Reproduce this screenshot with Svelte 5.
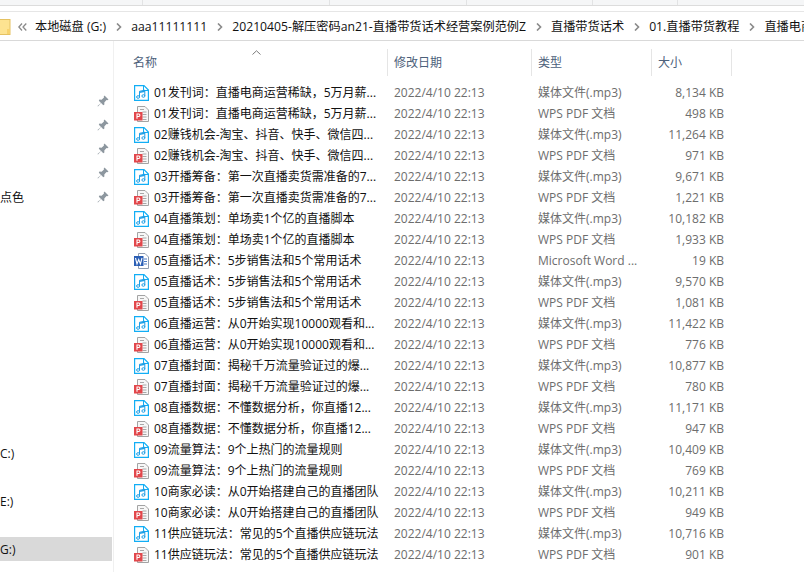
<script>
	const trunc = {
		a: '01发刊词：直播电商运营稀缺，5万月薪...',
		b: '02赚钱机会-淘宝、抖音、快手、微信四...',
		c: '03开播筹备：第一次直播卖货需准备的7...',
		d: '04直播策划：单场卖1个亿的直播脚本',
		e: '05直播话术：5步销售法和5个常用话术',
		f: '06直播运营：从0开始实现10000观看和...',
		g: '07直播封面：揭秘千万流量验证过的爆...',
		h: '08直播数据：不懂数据分析，你直播12...',
		i: '09流量算法：9个上热门的流量规则',
		j: '10商家必读：从0开始搭建自己的直播团队',
		k: '11供应链玩法：常见的5个直播供应链玩法'
	};
	const MP3 = '媒体文件(.mp3)';
	const PDF = 'WPS PDF 文档';
	const files = [
		{ name: trunc.a, kind: 'mp3', type: MP3, size: '8,134 KB' },
		{ name: trunc.a, kind: 'pdf', type: PDF, size: '498 KB' },
		{ name: trunc.b, kind: 'mp3', type: MP3, size: '11,264 KB' },
		{ name: trunc.b, kind: 'pdf', type: PDF, size: '971 KB' },
		{ name: trunc.c, kind: 'mp3', type: MP3, size: '9,671 KB' },
		{ name: trunc.c, kind: 'pdf', type: PDF, size: '1,221 KB' },
		{ name: trunc.d, kind: 'mp3', type: MP3, size: '10,182 KB' },
		{ name: trunc.d, kind: 'pdf', type: PDF, size: '1,933 KB' },
		{ name: trunc.e, kind: 'doc', type: 'Microsoft Word ...', size: '19 KB' },
		{ name: trunc.e, kind: 'mp3', type: MP3, size: '9,570 KB' },
		{ name: trunc.e, kind: 'pdf', type: PDF, size: '1,081 KB' },
		{ name: trunc.f, kind: 'mp3', type: MP3, size: '11,422 KB' },
		{ name: trunc.f, kind: 'pdf', type: PDF, size: '776 KB' },
		{ name: trunc.g, kind: 'mp3', type: MP3, size: '10,877 KB' },
		{ name: trunc.g, kind: 'pdf', type: PDF, size: '780 KB' },
		{ name: trunc.h, kind: 'mp3', type: MP3, size: '11,171 KB' },
		{ name: trunc.h, kind: 'pdf', type: PDF, size: '947 KB' },
		{ name: trunc.i, kind: 'mp3', type: MP3, size: '10,409 KB' },
		{ name: trunc.i, kind: 'pdf', type: PDF, size: '769 KB' },
		{ name: trunc.j, kind: 'mp3', type: MP3, size: '10,211 KB' },
		{ name: trunc.j, kind: 'pdf', type: PDF, size: '949 KB' },
		{ name: trunc.k, kind: 'mp3', type: MP3, size: '10,716 KB' },
		{ name: trunc.k, kind: 'pdf', type: PDF, size: '901 KB' }
	];
	const crumbs = ['本地磁盘 (G:)', 'aaa11111111', '20210405-解压密码an21-直播带货话术经营案例范例Z', '直播带货话术', '01.直播带货教程', '直播电商'];
	const pinned = ['', '', '', '', '点色'];
	const ribbonGroups = [143, 187, 137, 126, 85];
</script>

<div class="window">
	<div class="ribbon">
		{#each ribbonGroups as width}
			<div class="ribbon-group" style="width: {width}px"></div>
		{/each}
	</div>

	<div class="address">
		<svg class="folder" width="11" height="16" viewBox="0 0 11 16">
			<rect x="-6" y=".5" width="16" height="15" fill="#fde391" stroke="#e5c262" />
			<rect x="7" y="10" width="3" height="5" fill="#f7d36e" />
		</svg>
		<svg class="back" width="9" height="8" viewBox="0 0 9 8">
			<path d="M4 .5 .8 4 4 7.500M8.300 .5 5 4l3.300 3.500" fill="none" stroke="#8a8a8a" stroke-width="1.300" />
		</svg>
		{#each crumbs as crumb, i}
			<span class="crumb">{crumb}</span>
			{#if i < crumbs.length - 1}
				<svg class="chevron" width="6" height="8" viewBox="0 0 6 8">
					<path d="M1 .5 4.500 4 1 7.500" fill="none" stroke="#8a8a8a" stroke-width="1.600" />
				</svg>
			{/if}
		{/each}
	</div>

	<div class="body">
		<nav class="sidebar">
			<div class="pins">
				{#each pinned as label}
					<div class="nav-row">
						<span class="nav-label">{label}</span>
						<svg class="pin" width="12" height="12" viewBox="0 0 12 12">
							<path d="M7.500 .5 11.500 4.500 10.300 5.300 9.500 5 7.300 7.400 7.400 9.600 6.300 10.200 4.100 8 1 11.500 .5 11 4 7.900 1.800 5.700 2.400 4.600 4.600 4.700 7 2.500 6.700 1.700Z" fill="#8d979f" />
						</svg>
					</div>
				{/each}
			</div>
			<div class="drives">
				<div class="nav-row"><span class="nav-label">C:)</span></div>
				<div class="nav-row spaced"><span class="nav-label">E:)</span></div>
				<div class="nav-row spaced selected"><span class="nav-label">G:)</span></div>
			</div>
		</nav>

		<main class="list">
			<div class="head">
				<svg class="sort" width="9" height="5" viewBox="0 0 9 5">
					<path d="M.5 4.500 4.500 .8 8.500 4.500" fill="none" stroke="#7a7a7a" />
				</svg>
				<div class="th col-name">名称</div>
				<div class="th col-date">修改日期</div>
				<div class="th col-type">类型</div>
				<div class="th col-size">大小</div>
			</div>

			{#each files as file}
				<div class="row">
					<div class="col-name name">
						{#if file.kind === 'mp3'}
							<svg class="icon" width="16" height="16" viewBox="0 0 16 16">
								<path d="M.6 .6H10L14.400 5V15.400H.6Z" fill="#fff" stroke="#12aef5" stroke-width="1.200" />
								<path d="M9.500 .6V5.500H14.400" fill="none" stroke="#12aef5" />
								<path d="M5.500 12V6.300L10.800 5.200V11" fill="none" stroke="#1f9fe6" />
								<path d="M5.500 7.300 10.800 6.200" fill="none" stroke="#1f9fe6" stroke-width="1.400" />
								<ellipse cx="4.100" cy="12" rx="1.500" ry="1.300" fill="none" stroke="#1f9fe6" />
								<ellipse cx="9.400" cy="11" rx="1.500" ry="1.300" fill="none" stroke="#1f9fe6" />
							</svg>
						{:else if file.kind === 'pdf'}
							<svg class="icon" width="16" height="16" viewBox="0 0 16 16">
								<path d="M3.500 .5H11L14.500 4V15.500H3.500Z" fill="#f7f7f7" stroke="#a3a3a3" />
								<path d="M6 3.500H10M8.500 6H12.500M8.500 8.500H12.500M8.500 11H12.500M8.500 13.500H12.500" stroke="#a8a8a8" />
								<rect x="0" y="6" width="8.500" height="8.500" fill="#e2474b" />
								<path d="M3 12.800V8H4.900C6.200 8 6.200 10.500 4.900 10.500H3" fill="none" stroke="#fff" stroke-width="1.100" />
							</svg>
						{:else}
							<svg class="icon" width="16" height="16" viewBox="0 0 16 16">
								<path d="M4.500 .5H11L14.500 4V15.500H4.500Z" fill="#fff" stroke="#8f9cb0" />
								<path d="M10 6H13M10 8.500H13M10 11H13" stroke="#4a7bc4" />
								<rect x="0" y="3" width="9.500" height="10" fill="#2b5fb5" />
								<path d="M1.500 5 3 11 4.700 6.500 6.400 11 8 5" fill="none" stroke="#fff" stroke-width="1.100" />
							</svg>
						{/if}
						<span>{file.name}</span>
					</div>
					<div class="col-date cell">2022/4/10 22:13</div>
					<div class="col-type cell">{file.type}</div>
					<div class="col-size cell">{file.size}</div>
				</div>
			{/each}
		</main>
	</div>
</div>

<style>
	:global(body) {
		margin: 0;
		background: #fff;
		overflow: hidden;
	}

	.window {
		width: 804px;
		height: 573px;
		overflow: hidden;
		font-family: "Open Sans", "Noto Sans CJK SC", sans-serif;
		font-size: 12px;
		line-height: 16px;
		color: #111;
	}

	.ribbon {
		display: flex;
		height: 5px;
		background: #f5f6f7;
		border-bottom: 1px solid #dcdcdc;
	}

	.ribbon-group {
		border-right: 1px solid #e2e3e4;
		box-sizing: border-box;
	}

	.address {
		height: 28px;
		margin-top: 5px;
		border-top: 1px solid #e6e6e6;
		border-bottom: 1px solid #d9d9d9;
		display: flex;
		align-items: center;
		white-space: nowrap;
		overflow: hidden;
		font-size: 12.2px;
	}

	.folder {
		flex: none;
		margin-top: 2px;
	}

	.back {
		flex: none;
		margin: 1px 8px 0 7px;
	}

	.crumb {
		flex: none;
		padding-top: 2px;
	}

	.chevron {
		flex: none;
		margin: 1px 9px 0 10px;
	}

	.body {
		display: flex;
	}

	.sidebar {
		width: 114px;
		flex: none;
		height: 531px;
		border-right: 1px solid #f0f0f0;
		box-sizing: border-box;
		padding-top: 48px;
	}

	.nav-row {
		height: 24px;
		width: 112px;
		display: flex;
		align-items: center;
		justify-content: space-between;
		box-sizing: border-box;
		padding-right: 3px;
	}

	.nav-label {
		padding-top: 2px;
	}

	.drives {
		margin-top: 232px;
	}

	.spaced {
		margin-top: 24px;
	}

	.selected {
		background: #d9d9d9;
	}

	.list {
		flex: 1;
		min-width: 0;
		padding-left: 19px;
	}

	.head,
	.row {
		display: grid;
		grid-template-columns: 255px 144px 120px 80px;
	}

	.head {
		position: relative;
		height: 27px;
		margin-top: 8px;
		margin-bottom: 6px;
		color: #4c607a;
	}

	.sort {
		position: absolute;
		left: 119px;
		top: 1px;
	}

	.th {
		display: flex;
		align-items: center;
		border-right: 1px solid #e5e5e5;
		padding-left: 6px;
		padding-top: 1px;
	}

	.head .col-name {
		padding-left: 0;
	}

	.row {
		height: 21px;
		align-items: center;
	}

	.name {
		display: flex;
		align-items: center;
		gap: 4px;
		white-space: nowrap;
		padding-left: 1px;
	}

	.icon {
		flex: none;
	}

	.cell {
		color: #6d6d6d;
		padding-left: 6px;
		white-space: nowrap;
	}

	.row .col-size {
		text-align: right;
		padding: 0 8px 0 0;
	}
</style>
